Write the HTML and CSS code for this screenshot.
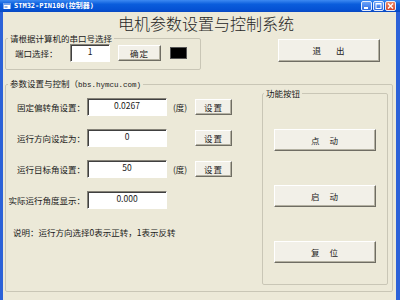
FILE: index.html
```html
<!DOCTYPE html>
<html lang="zh-CN">
  <head>
    <meta charset="UTF-8" />
    <meta name="viewport" content="width=device-width, initial-scale=1.0" />
    <title>STM32-PIN100(控制器)</title>
    <link rel="stylesheet" href="styles.css">
  </head>
  <body>
    <div class="window">
      <div class="titlebar">
        <svg class="app-icon" viewBox="0 0 8 8">
          <rect x="0.5" y="1" width="7" height="6" fill="#fff" />
          <rect x="0.5" y="1" width="7" height="2" fill="#6fa0ee" />
          <rect x="1.5" y="4" width="3" height="2" fill="#9cb8e6" />
        </svg>
        <span class="title">STM32-PIN100(控制器)</span>
        <div class="caption-buttons">
          <span class="cap-btn">
            <svg viewBox="0 0 9 8"><rect x="2" y="5" width="4" height="2" fill="#fff" /></svg>
          </span>
          <span class="cap-btn">
            <svg viewBox="0 0 9 8"><rect x="2" y="1.5" width="5" height="5" fill="none" stroke="#fff" stroke-width="1" /><rect x="2" y="1" width="5" height="1.5" fill="#fff" /></svg>
          </span>
          <span class="cap-btn close">
            <svg viewBox="0 0 9 8"><path d="M2 1.5 L7 6.5 M7 1.5 L2 6.5" stroke="#fff" stroke-width="1.4" /></svg>
          </span>
        </div>
      </div>

      <div class="client">
        <h1>电机参数设置与控制系统</h1>

        <div class="top-row">
          <fieldset class="group port-group">
            <legend>请根据计算机的串口号选择</legend>
            <div class="port-row">
              <span class="port-label">端口选择：</span>
              <div class="edit port-edit">1</div>
              <button class="btn ok-btn">确定</button>
              <span class="led"></span>
            </div>
          </fieldset>
          <button class="btn exit-btn">退 出</button>
        </div>

        <fieldset class="group param-group">
          <legend>参数设置与控制（<span class="latin">bbs.hymcu.com)</span></legend>
          <div class="params">
            <div class="rows">
              <div class="row">
                <span class="label">固定偏转角设置：</span>
                <div class="edit">0.0267</div>
                <span class="unit">(度)</span>
                <button class="btn set-btn">设置</button>
              </div>
              <div class="row">
                <span class="label">运行方向设定为：</span>
                <div class="edit">0</div>
                <span class="unit"></span>
                <button class="btn set-btn">设置</button>
              </div>
              <div class="row">
                <span class="label">运行目标角设置：</span>
                <div class="edit">50</div>
                <span class="unit">(度)</span>
                <button class="btn set-btn">设置</button>
              </div>
              <div class="row">
                <span class="label">实际运行角度显示：</span>
                <div class="edit">0.000</div>
              </div>
              <p class="note">说明：运行方向选择0表示正转，1表示反转</p>
            </div>

            <fieldset class="group func-group">
              <legend>功能按钮</legend>
              <button class="btn func-btn">点 动</button>
              <button class="btn func-btn">启 动</button>
              <button class="btn func-btn">复 位</button>
            </fieldset>
          </div>
        </fieldset>
      </div>
    </div>
  </body>
</html>
```

FILE: styles.css
```css
* {
  box-sizing: border-box;
}

body {
  margin: 0;
  font-family: "Noto Sans CJK SC", sans-serif;
  background-color: #ece9d8;
  color: #1a1a1a;
}

.window {
  width: 400px;
  height: 300px;
  display: flex;
  flex-direction: column;
  overflow: hidden;
}

/* title bar */
.titlebar {
  height: 12px;
  display: flex;
  align-items: center;
  padding: 0 4px 0 3px;
  background: linear-gradient(#3d8af2, #0a5ddc 35%, #0552d4 80%, #0a48c0);
}

.app-icon {
  width: 8px;
  height: 8px;
  display: block;
}

.title {
  margin-left: 3px;
  color: #fff;
  font-family: "DejaVu Sans Mono", "Noto Sans CJK SC", monospace;
  font-weight: bold;
  font-size: 7px;
  line-height: 12px;
}

.caption-buttons {
  margin-left: auto;
  display: flex;
  gap: 1px;
}

.cap-btn {
  width: 11px;
  height: 10px;
  border: 1px solid #e8eefc;
  border-radius: 2px;
  background: linear-gradient(#6aa2fa, #2f6be0);
  display: flex;
}

.cap-btn svg {
  width: 9px;
  height: 8px;
}

.cap-btn.close {
  background: linear-gradient(#ec8a6a, #d5452a);
}

/* client area */
.client {
  flex: 1;
  background-color: #ece9d8;
  border-left: 3px solid #2c62d8;
  border-right: 4px solid #2c62d8;
  padding-left: 2px;
}

h1 {
  margin: 2px 0 0 113px;
  font-size: 16px;
  line-height: 19px;
  font-weight: 300;
  color: #262626;
}

.group {
  margin: 0;
  padding: 0;
  border: 1px solid #c9c6b6;
  border-radius: 2px;
  min-width: 0;
}

.group legend {
  margin-left: 2px;
  padding: 0 2px;
  font-size: 8.5px;
  line-height: 11px;
}

.latin {
  font-family: "Liberation Mono", monospace;
  font-size: 7.5px;
}

.btn {
  padding: 0;
  font-family: inherit;
  font-size: 8.5px;
  line-height: 11px;
  color: #1a1a1a;
  background-color: #f2f0e8;
  border: 1px solid;
  border-color: #fff #6f6d63 #6f6d63 #fff;
  border-radius: 0;
  box-shadow: inset -1px -1px 0 #b4b1a2;
  letter-spacing: 1px;
}

.edit {
  width: 80px;
  height: 18px;
  background-color: #fff;
  border: 1px solid;
  border-color: #858278 #fff #fff #858278;
  box-shadow: inset 1px 1px 0 #404040;
  text-align: center;
  font-size: 8.5px;
  line-height: 10px;
  padding-top: 1px;
}

/* port selection */
.top-row {
  display: flex;
  align-items: flex-start;
}

.port-group {
  width: 196px;
  height: 37px;
}

.port-row {
  display: flex;
  align-items: center;
  font-size: 8.5px;
  line-height: 11px;
}

.port-label {
  margin-left: 9px;
  width: 55px;
}

.port-edit {
  width: 40px;
}

.ok-btn {
  margin-left: 8px;
  width: 43px;
  height: 16px;
}

.led {
  margin-left: 9px;
  width: 17px;
  height: 12px;
  background-color: #000;
  border: 1px solid #555;
}

.exit-btn {
  margin: 6px 0 0 77px;
  width: 102px;
  height: 23px;
  word-spacing: 11px;
}

/* parameters */
.param-group {
  margin-top: 8px;
  width: 388px;
  height: 214px;
}

.params {
  display: flex;
  align-items: flex-start;
}

.rows {
  width: 256px;
  padding-top: 7px;
  font-size: 8.5px;
  line-height: 11px;
}

.row {
  display: flex;
  align-items: center;
  height: 18px;
  margin-bottom: 13px;
}

.label {
  width: 79px;
  text-align: right;
  white-space: nowrap;
}

.row .edit {
  margin-left: 2px;
}

.unit {
  width: 18px;
  margin-left: 6px;
}

.set-btn {
  margin-left: 4px;
  width: 37px;
  height: 16px;
}

.note {
  margin: 18px 0 0 7px;
}

/* function buttons */
.func-group {
  width: 126px;
  height: 197px;
  margin-top: -3px;
}

.func-group legend {
  margin-left: 1px;
}

.func-btn {
  display: block;
  margin: 34px 0 0 11px;
  width: 102px;
  height: 22px;
  word-spacing: 6px;
}

.func-btn:first-of-type {
  margin-top: 30px;
}
```
